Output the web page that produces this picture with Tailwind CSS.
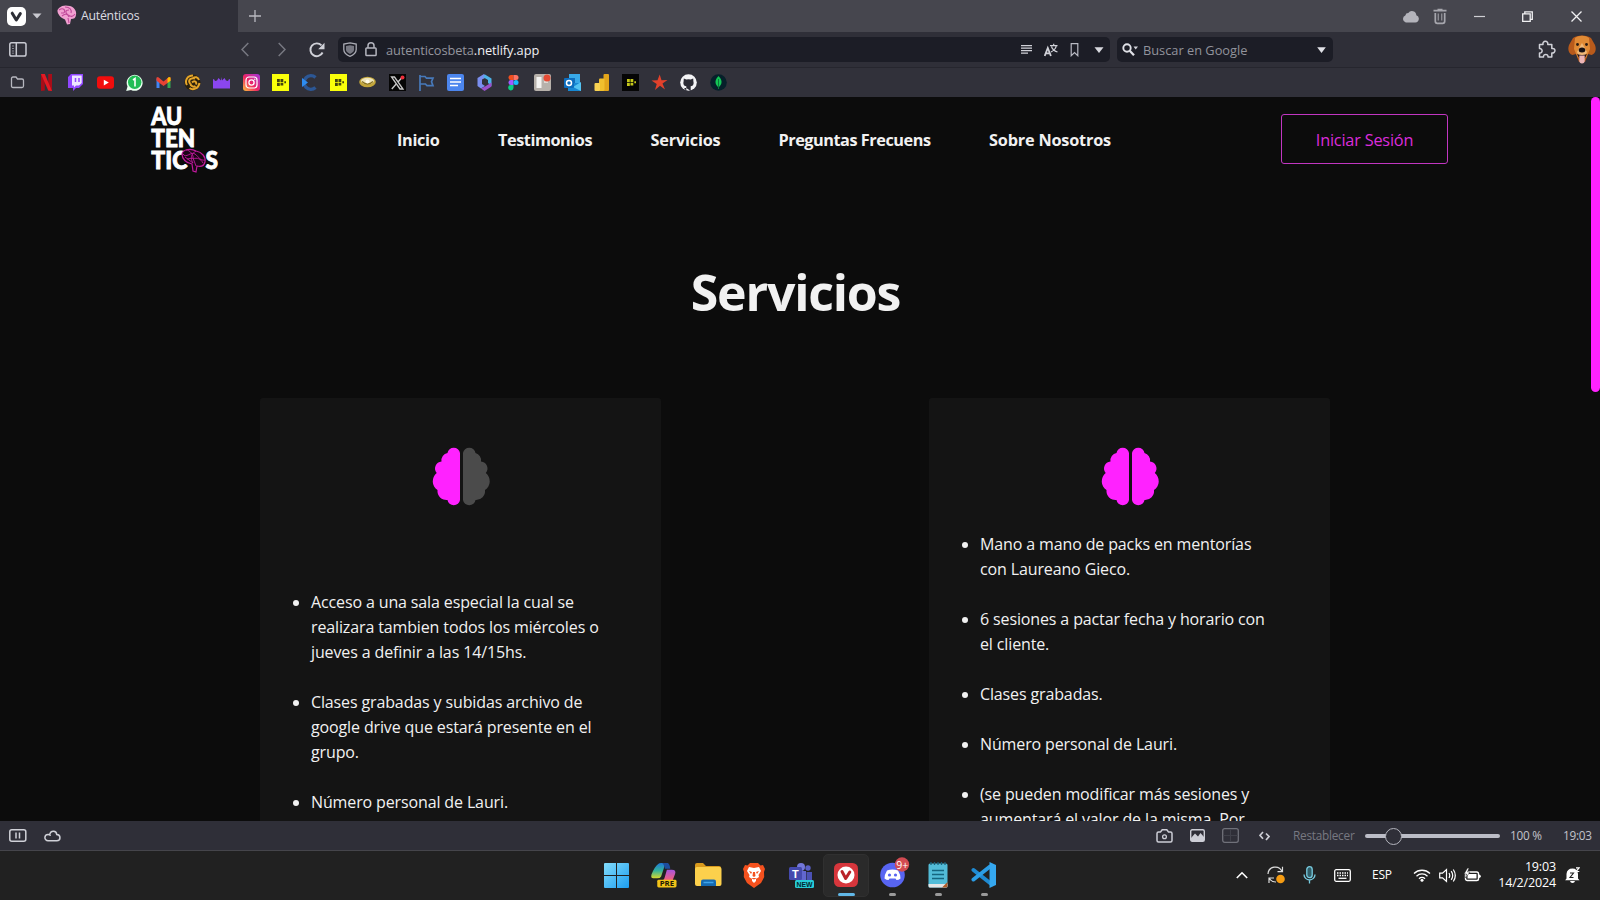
<!DOCTYPE html>
<html lang="es">
<head>
<meta charset="utf-8">
<title>Auténticos</title>
<script src="https://cdn.jsdelivr.net/npm/@tailwindcss/browser@4"></script>
</head>
<body class="flex h-[900px] w-[1600px] flex-col overflow-hidden bg-[#0c0c0c] font-['Open_Sans','Noto_Sans',sans-serif] text-[#dcdce2]">

<!-- Tab bar -->
<header class="flex h-8 shrink-0 items-center bg-[#46464e]">
  <div class="flex w-[52px] items-center gap-[6px] pl-[7px]">
    <svg class="h-[19px] w-[19px]" viewBox="0 0 19 19"><rect width="19" height="19" rx="5" fill="#fff"/><path d="M5.2 6.2 9.3 13l4-6.4" fill="none" stroke="#2d2e36" stroke-width="3" stroke-linecap="round" stroke-linejoin="round"/></svg>
    <svg class="h-[6px] w-[10px]" viewBox="0 0 10 6"><path d="M.5.5h9L5 5.5z" fill="#c9c9d0"/></svg>
  </div>
  <div class="flex h-8 w-[186px] items-center gap-[4px] bg-[#2f2f38] pb-[2px] pl-[5px]">
    <svg class="h-5 w-5" viewBox="0 0 20 20"><path d="M2 3C5 0 9 0 13 1c4 1 7 5 6 9-.5 3-2 4-5 4l-1 5-3 .5-2-5C4 13 0 9 .5 5Z" fill="#f1a0d0"/><path d="M2 5c4-3 7 0 5 3M8 2c5 0 7 3 6 6M5 11c3-3 6-2 7 1M12 5c-4 0-4 3-1 5s5 2 7-1M11 13l1 5M4 8h3" fill="none" stroke="#c1499a" stroke-width="1.1"/></svg>
    <span class="w-[60px] pt-[2px] text-[12.3px] tracking-[-0.25px] whitespace-nowrap">Auténticos</span>
  </div>
  <svg class="ml-[11px] h-3 w-3" viewBox="0 0 12 12"><path d="M6 0v12M0 6h12" stroke="#b9b9c0" stroke-width="1.3"/></svg>
  <div class="ml-auto flex items-center pr-[18px]">
    <svg class="mr-[14px] h-[13px] w-[17px]" viewBox="0 0 17 13"><path d="M3.8 12.5a3.7 3.7 0 0 1-.5-7 3 3 0 0 1 3-2.4 4.3 4.3 0 0 1 8 2.2 3.7 3.7 0 0 1-.9 7.2z" fill="#b4b4bb"/></svg>
    <svg class="mr-[27px] h-[17px] w-[14px]" viewBox="0 0 14 16"><path d="M.5 2.2h13M4.5 1h5M2.3 4.5v8.3q0 2 2 2h5.4q2 0 2-2V4.5" fill="none" stroke="#a6a6ad" stroke-width="1.7"/><path d="M5.3 5v7M8.7 5v7" stroke="#8b8b92" stroke-width="1.4"/></svg>
    <svg class="mr-[37px] h-3 w-[11px]" viewBox="0 0 11 12"><path d="M0 6.5h11" stroke="#cfcfd4" stroke-width="1.2"/></svg>
    <svg class="mr-[38px] h-[11px] w-[11px]" viewBox="0 0 11 11"><path d="M.7 2.8h7.5v7.5H.7zM2.8 2.6V.8h7.5v7.5H8.4" fill="none" stroke="#f0f0f2" stroke-width="1.3"/></svg>
    <svg class="h-[11px] w-[11px]" viewBox="0 0 11 11"><path d="m.5.5 10 10m0-10-10 10" stroke="#f0f0f2" stroke-width="1.3"/></svg>
  </div>
</header>

<!-- Address bar -->
<div class="flex h-[35px] shrink-0 items-center bg-[#2f2f38] pr-1 pl-[9px]">
  <svg class="h-[15px] w-[18px]" viewBox="0 0 18 15"><rect x=".8" y=".8" width="16.2" height="13.2" rx="1.8" fill="none" stroke="#c9cad2" stroke-width="1.5"/><path d="M7.3 1v13" stroke="#c9cad2" stroke-width="1.5"/><path d="M3 4h2M3 6.5h2M3 9h2M3 11.2h2" stroke="#85868f"/></svg>
  <svg class="ml-[214px] h-[15px] w-2" viewBox="0 0 8 15"><path d="M7.3 1 1 7.5 7.3 14" fill="none" stroke="#777881" stroke-width="1.5"/></svg>
  <svg class="ml-[29px] h-[15px] w-2" viewBox="0 0 8 15"><path d="M.7 1 7 7.5.7 14" fill="none" stroke="#777881" stroke-width="1.5"/></svg>
  <svg class="mr-[13px] ml-[23px] h-4 w-4" viewBox="0 0 16 16"><path d="M13.6 10.5A6.4 6.4 0 1 1 12.5 3.4" fill="none" stroke="#d0d1d8" stroke-width="1.9"/><path d="M15.5.8v6.4H9.2z" fill="#d0d1d8"/></svg>
  <div class="flex h-[25px] w-[772px] items-center rounded-[5px] bg-[#1c1d26] pr-[5px] pl-[5px]">
    <svg class="h-[15px] w-[14px]" viewBox="0 0 14 15"><path d="M7 .8 13.2 2v5.5c0 3-2.5 5.3-6.2 6.8C3.3 12.8.8 10.5.8 7.5V2z" fill="none" stroke="#a9aab3" stroke-width="1.3"/><path d="M7 3.2l4 .8v3.5c0 2-1.5 3.3-4 4.5-2.5-1.2-4-2.5-4-4.5V4z" fill="#777882"/></svg>
    <svg class="ml-2 h-[15px] w-3" viewBox="0 0 12 15"><rect x=".9" y="6" width="10.2" height="7.6" rx=".8" fill="none" stroke="#b4b5be" stroke-width="1.5"/><path d="M3 6V3.8a3 3 0 0 1 6 0V6" fill="none" stroke="#b4b5be" stroke-width="1.5"/></svg>
    <span class="ml-[9px] pt-[2px] text-[12.8px] tracking-[-0.08px] whitespace-nowrap text-[#94959e]">autenticosbeta<span class="text-[#f0f0f4]">.netlify.app</span></span>
    <div class="ml-auto flex items-center">
      <svg class="mr-[12px] h-[9px] w-[11px]" viewBox="0 0 11 9"><path d="M0 .7h11M0 3.2h11M0 5.7h11M0 8.2h7" stroke="#d0d1d8" stroke-width="1.2"/></svg>
      <svg class="mr-3 h-[14px] w-[14px]" viewBox="0 0 14 14"><path d="m.7 13 3.1-8 3.100 8M1.700 10.300h4.200" fill="none" stroke="#d0d1d8" stroke-width="1.800"/><path d="M6 2.700h7.500M9.700.8v2M7 9c3-1.500 4.800-3.500 5.200-6M7.500 3.500c.7 2.500 3 4.500 6 5.500" fill="none" stroke="#d0d1d8" stroke-width="1.200"/></svg>
      <svg class="mr-[15px] h-[14px] w-[9px]" viewBox="0 0 8 14"><path d="M.7.7h6.600v12L4 9.500.7 12.700z" fill="none" stroke="#b9bac3" stroke-width="1.200"/></svg>
      <svg class="mr-px h-[6px] w-[10px]" viewBox="0 0 10 6"><path d="M.5.3h9L5 6z" fill="#d8d9df"/></svg>
    </div>
  </div>
  <div class="ml-[7px] flex h-[25px] w-[216px] items-center rounded-[5px] bg-[#1c1d26] px-[5px]">
    <svg class="h-[13px] w-[17px]" viewBox="0 0 17 13"><circle cx="5" cy="5" r="3.700" fill="none" stroke="#e0e1e7" stroke-width="1.900"/><path d="m7.700 7.700 4.300 4.500" stroke="#e0e1e7" stroke-width="2.300"/><path d="M11.500 3.500H16L13.700 6.500z" fill="#d0d1d8"/></svg>
    <span class="ml-[4px] pt-[3px] text-[12.8px] whitespace-nowrap text-[#92939c]">Buscar en Google</span>
    <svg class="mr-[2px] ml-auto h-[6px] w-[9px]" viewBox="0 0 9 6"><path d="M.2.3h8.600L4.500 6z" fill="#e0e1e7"/></svg>
  </div>
  <svg class="ml-auto h-[18px] w-[18px] -translate-y-px" viewBox="0 0 18 18"><path d="M1.500 4.500H5c-1-4 5.500-4.500 4.800 0h4v4c4.200-1 4.200 5 0 4.500v4H10c.5-3.500-5-3.500-4.500 0h-4v-4c3.500.4 3.500-4.700 0-4.500z" fill="none" stroke="#d0d1d8" stroke-width="1.500" stroke-linejoin="round"/></svg>
  <svg class="ml-[12px] h-[29px] w-[28px]" viewBox="0 0 28 29"><path d="M5 3C9-.5 19-.5 23 3l4 7c2 6-.5 9-3.500 10L20 19l-3 8h-6l-3-8-3.500 1C1 19-.7 15 1 10z" fill="#b85a1b"/><path d="M7 3c4-3 10-3 14 0l1 11-4 9h-8L6 14z" fill="#e08a35"/><path d="M14 8l-5 9 2 4h6l2-4z" fill="#efb878"/><circle cx="9.500" cy="9.500" r="1.400" fill="#2a1a12"/><circle cx="18.500" cy="9.500" r="1.400" fill="#2a1a12"/><ellipse cx="14" cy="15" rx="3.300" ry="2.500" fill="#171013"/><path d="M9 19q5 2 10 0l-2 4h-6z" fill="#2a1515"/><path d="M11.300 20.500h5.400v5a2.700 3 0 0 1-5.400 0z" fill="#ecb5b7"/></svg>
</div>

<!-- Bookmarks bar -->
<nav class="flex h-[30px] shrink-0 items-center border-t border-[#26262e] bg-[#31313a] pl-[3px] [&>span]:flex [&>span]:w-[29.2px] [&>span]:justify-center [&_svg]:h-[17px] [&_svg]:w-[17px]">
  <span><svg viewBox="0 0 17 17"><path d="M2.500 4.500q0-1.500 1.500-1.500h3l1.500 2h4.500q1.500 0 1.500 1.500v5.500q0 1.500-1.500 1.500H4q-1.500 0-1.500-1.500z" fill="none" stroke="#b6b7bf" stroke-width="1.300"/></svg></span>
  <span><svg viewBox="0 0 17 17"><path d="M3 0h3.800v16.500L3 17zM10.200 0H14v17l-3.800-.5z" fill="#a80d18"/><path d="M3 0h3.800L14 17l-3.800-.5z" fill="#e31b24"/></svg></span>
  <span><svg viewBox="0 0 17 17"><path d="M4 0h12v10l-4 4H9l-3 3v-3H1V3z" fill="#9147ff"/><path d="M5 1.500h9.700V9L12 11.500H9L7 13.500v-2H5z" fill="#eee6ff"/><path d="M8.500 4v4M12 4v4" stroke="#9147ff" stroke-width="1.500"/></svg></span>
  <span><svg viewBox="0 0 17 17"><rect y="2.300" width="17" height="12.500" rx="3" fill="#f20d0d"/><path d="m6.800 5.800 5 2.800-5 2.800z" fill="#fff"/></svg></span>
  <span><svg viewBox="0 0 17 17"><path d="M.2 17 1.500 12.500A8 8 0 1 1 5 16z" fill="#e9fff0"/><circle cx="8.700" cy="8.300" r="6.700" fill="#21bd55"/><path d="m7 6 2-1.500v8" fill="none" stroke="#fff" stroke-width="1.600"/></svg></span>
  <span><svg viewBox="0 0 17 17"><path d="M1.500 4.500h3v9.500h-3z" fill="#4285f4"/><path d="M12.500 4.500h3v9.500h-3z" fill="#34a853"/><path d="M1.500 3.500 3 3l5.500 4.500L14 3l1.500.5v3.300L8.500 12 1.500 6.800z" fill="#e84234"/><path d="m12.500 4.200 1.500-1.200 1.500.5v3.300L12.500 9z" fill="#fbbc04"/></svg></span>
  <span><svg viewBox="0 0 17 17"><circle cx="8.500" cy="8.500" r="8" fill="#2b210e"/><g fill="none" stroke="#e5a52a" stroke-width="2"><path d="M9 1.500c-6 0-8.500 5.500-6 9.500M11 4.500c-5-1-7 2-5 5M15 6c-1-3-4-3.500-6-2M15.500 9c-1 6-7 7.500-10 5M6.500 9c-.5 3 3 4.500 5 3M8 8.500c2.500-2.500 5-.5 4 2"/></g></svg></span>
  <span><svg viewBox="0 0 17 17"><path d="M0 5q1.500 0 2 2l2-.5L5.500 4 8 6.500 8.500 3 9 6.500 11.500 4 13 6.500l2 .5q.5-2 2-2v9.500H0z" fill="#8b46f0"/></svg></span>
  <span><svg viewBox="0 0 17 17"><defs><linearGradient id="ig" x1="0" y1="1" x2="1" y2="0"><stop stop-color="#ffc53a"/><stop offset=".45" stop-color="#ee2564"/><stop offset="1" stop-color="#a136dd"/></linearGradient></defs><rect width="17" height="17" rx="3" fill="url(#ig)"/><rect x="3" y="3" width="11" height="11" rx="3" fill="none" stroke="#fff" stroke-width="1.200"/><circle cx="8.500" cy="8.500" r="2.600" fill="none" stroke="#fff" stroke-width="1.300"/><circle cx="11.800" cy="5.200" r=".7" fill="#fff"/></svg></span>
  <span><svg viewBox="0 0 17 17"><path fill="#faff0a" d="M0 0h17v17H0z"/><path d="M5 5h2.800v3H5zm3.500 0h2.800v3H8.500zM5 8.700h2.800v3.300H5zm3.500 0h2.800v2.800H8.500zm3.800-1.500h1.700v2h-1.700z" fill="#42430e"/></svg></span>
  <span><svg viewBox="0 0 17 17"><path d="M14.500 3.500A6.800 6.800 0 1 0 14.500 13.500" fill="none" stroke="#2c5795" stroke-width="3.300"/><path d="m1 4 6 4.500-6 4.500z" fill="#2e8cf0"/></svg></span>
  <span><svg viewBox="0 0 17 17"><path fill="#faff0a" d="M0 0h17v17H0z"/><path d="M5 5h2.800v3H5zm3.500 0h2.800v3H8.500zM5 8.700h2.800v3.300H5zm3.500 0h2.800v2.800H8.500zm3.800-1.500h1.700v2h-1.700z" fill="#42430e"/></svg></span>
  <span><svg viewBox="0 0 17 17"><ellipse cx="8.500" cy="8" rx="8.300" ry="5.300" fill="#c3a63a"/><ellipse cx="8.500" cy="7" rx="6.500" ry="3.300" fill="#eee4ba"/><path d="M3 7.500q5.500 5 11 0" fill="none" stroke="#87711f" stroke-width="1.300"/><circle cx="8.500" cy="7.500" r="2" fill="#fffbe8"/></svg></span>
  <span><svg viewBox="0 0 17 17"><path fill="#050505" d="M0 0h17v17H0z"/><path d="M2.500 3h3L14 15h-3z" fill="none" stroke="#c7c7c7" stroke-width="1.300"/><path d="m13.500 3-4.500 5M7.200 10 2.800 15" stroke="#c7c7c7" stroke-width="1.400"/><circle cx="13.500" cy="3.500" r="2" fill="#ee2d3a"/></svg></span>
  <span><svg viewBox="0 0 17 17"><path d="M2 1v16M2 2.500h5l1.500 1.700H15l-1.500 3.500 1.500 4H9L7.500 10H2" fill="none" stroke="#4779ba" stroke-width="1.700"/></svg></span>
  <span><svg viewBox="0 0 17 17"><rect width="17" height="17" rx="2" fill="#4c86ee"/><path d="M3 4.500h11M3 8h11M3 11.500h8" stroke="#fff" stroke-width="1.600"/></svg></span>
  <span><svg viewBox="0 0 17 17"><path d="M8 0 1.500 4v8L5 14.500l4-2.500-3-2V5.500L11 3z" fill="#7b8ff0"/><path d="m9 .5 6.500 4V12L12 9V6L7 3z" fill="#4cb3e8"/><path d="M5 14.500 8.500 17l7-4.500v-4L9 12.500z" fill="#9a51cc"/></svg></span>
  <span><svg viewBox="0 0 17 17"><path d="M8.500 1H6a2.500 2.500 0 0 0 0 5h2.500z" fill="#f24e1e"/><path d="M8.500 1H11a2.500 2.500 0 0 1 0 5H8.500z" fill="#ff7262"/><path d="M8.500 6H6a2.500 2.500 0 0 0 0 5h2.500z" fill="#a259ff"/><circle cx="11" cy="8.500" r="2.500" fill="#1abcfe"/><path d="M8.500 11H6A2.700 2.700 0 1 0 8.500 14z" fill="#0acf83"/></svg></span>
  <span><svg viewBox="0 0 17 17"><rect width="17" height="17" rx="2" fill="#b7b1ab"/><path d="M2.500 3h5v11h-5z" fill="#f5f4f2"/><path d="M10 3h4v6h-4z" fill="#ddd8d3"/><circle cx="13" cy="4" r="3.500" fill="#e64b35"/></svg></span>
  <span><svg viewBox="0 0 17 17"><path d="M5 0h11v12H5z" fill="#38a9e8"/><path d="M5 4h6v5H5z" fill="#136cb7"/><path d="M4 9h13v8H4z" fill="#1688d4"/><path d="m17 8-8 5 8 4z" fill="#54c4f2"/><rect y="4" width="10" height="10" rx="1" fill="#0d6dbd"/><circle cx="5" cy="9" r="2.500" fill="none" stroke="#fff" stroke-width="1.500"/></svg></span>
  <span><svg viewBox="0 0 17 17"><rect x="10.500" width="5.500" height="17" rx="1" fill="#e3a51b"/><rect x="6" y="4.500" width="5.500" height="12.500" rx="1" fill="#f1bf2d"/><rect x="1.500" y="9" width="5.500" height="8" rx="1" fill="#f8d252"/></svg></span>
  <span><svg viewBox="0 0 17 17"><path fill="#050505" d="M0 0h17v17H0z"/><path d="M5 5h2.800v3H5zm3.500 0h2.800v3H8.500zM5 8.700h2.800v3.300H5zm3.500 0h2.800v2.800H8.500zm3.800-1.500h1.700v2h-1.700z" fill="#c5c81a"/></svg></span>
  <span><svg viewBox="0 0 17 17"><path d="m8.700.5 1.800 5.700 6-.2-5 3.500 2.500 6-5-3.700L4 16l1.700-6L.5 6.500l6-.3z" fill="#e2412b"/></svg></span>
  <span><svg viewBox="0 0 17 17"><circle cx="8.500" cy="8.500" r="8.300" fill="#f4f4f6"/><path d="M6.300 17v-3q-2.800.5-3.300-1.500M6.300 14v-1.700C3.500 12 3 9.500 3.600 7.500L3.800 4.500l2.500 1q2.200-.5 4.400 0l2.500-1 .2 3c.6 2 .1 4.500-2.700 4.800V17z" fill="#2c2c35"/></svg></span>
  <span><svg viewBox="0 0 17 17"><circle cx="8.500" cy="8.500" r="8.300" fill="#06202a"/><path d="M8.500 2c4.500 4.500 3.500 8.500 0 11.500C5 10.500 4 6.500 8.500 2z" fill="#13c655"/><path d="M8.500 5v10" stroke="#087a3a"/></svg></span>
</nav>

<!-- Page -->
<main class="relative h-[724px] shrink-0 overflow-hidden bg-[#0c0c0c] text-[#f1f1f1]">
  <div class="flex h-[86px] items-center pr-[152px] pl-[151px]">
    <svg class="h-[70px] w-[68px] overflow-visible" viewBox="0 0 68 70" font-family="Lato, sans-serif" font-weight="900" font-size="25.5" fill="#fff" stroke="#fff" stroke-width=".9">
      <text x="0.300" y="20" textLength="31" lengthAdjust="spacingAndGlyphs">AU</text>
      <text x="0.300" y="41.600" textLength="44" lengthAdjust="spacingAndGlyphs">TEN</text>
      <text x="0.300" y="63.500" textLength="36" lengthAdjust="spacingAndGlyphs">TIC</text>
      <text x="54.500" y="63.500" textLength="12.500" lengthAdjust="spacingAndGlyphs">S</text>
      <path d="M31 49c1-5 9-6 14-3 6 1 10 6 9 11-1 4-4 5-8 4l-1 6-3-1-1-7c-6-1-10-5-10-10z" fill="#1a0616" stroke="#c11a9d" stroke-width="1.200"/>
      <path d="M32 49c3 5 8-3 12 0s5 7 10 6M35 45c4 0 8 5 7 9M45 46c-5 3-6 7-3 12M42 54c4-2 8 0 10 4M36 54l6-1 3 8M34 52l8 6" fill="none" stroke="#c11a9d" stroke-width=".9"/>
    </svg>
    <nav class="ml-[178px] flex gap-[58px] text-[16.3px] font-bold tracking-[-0.35px] whitespace-nowrap">
      <a class="w-[43px]">Inicio</a><a class="w-[94.500px] tracking-[-0.45px]">Testimonios</a><a class="w-[70px] tracking-[-0.2px]">Servicios</a><a class="w-[152.500px] tracking-[-0.47px]">Preguntas Frecuens</a><a class="w-[123px] tracking-[-0.2px]">Sobre Nosotros</a>
    </nav>
    <a class="ml-auto flex h-[50px] w-[167px] -translate-y-px items-center justify-center rounded-[3px] border border-[#c236c2] pt-[2px] text-[16.3px] tracking-[-0.2px] whitespace-nowrap text-[#dc2cdc]">Iniciar Sesión</a>
  </div>
  <h1 class="mt-[70px] pr-[9px] text-center text-[50px] leading-[78px] font-bold tracking-[-1.2px]">Servicios</h1>
  <div class="mt-[67px] flex justify-between pr-[270px] pl-[260px] text-[16px] leading-[25px] tracking-[-0.13px]">
    <section class="h-[600px] w-[401px] rounded-[3px] bg-[#141414] pt-[49px]">
      <svg class="mx-auto h-[59px] w-[58px] overflow-visible" viewBox="0 0 58 59"><path d="M28 6a6.300 6 0 0 0-12.500 0A7.500 7.500 0 0 0 9.500 14.500 7 7 0 0 0 4.700 26 10.500 10.500 0 0 0 5.500 43 9 9 0 0 0 15.500 53a6.300 6 0 0 0 12.500 0z" fill="#ff22ff"/><path d="M31 6a6.300 6 0 0 1 12.500 0A7.500 7.500 0 0 1 49 14.500 7 7 0 0 1 53.800 26 10.500 10.500 0 0 1 53 43 9 9 0 0 1 43.500 53a6.300 6 0 0 1-12.500 0z" fill="#4b4b4b"/></svg>
      <ul class="mt-[84px] flex list-disc flex-col gap-[25px] pl-[51px] whitespace-nowrap">
        <li>Acceso a una sala especial la cual se<br>realizara tambien todos los miércoles o<br>jueves a definir a las 14/15hs.</li>
        <li>Clases grabadas y subidas archivo de<br>google drive que estará presente en el<br>grupo.</li>
        <li>Número personal de Lauri.</li>
      </ul>
    </section>
    <section class="h-[600px] w-[401px] rounded-[3px] bg-[#141414] pt-[49px]">
      <svg class="mx-auto h-[59px] w-[58px] overflow-visible" viewBox="0 0 58 59"><path d="M28 6a6.300 6 0 0 0-12.500 0A7.500 7.500 0 0 0 9.500 14.500 7 7 0 0 0 4.700 26 10.500 10.500 0 0 0 5.500 43 9 9 0 0 0 15.500 53a6.300 6 0 0 0 12.500 0zM31 6a6.300 6 0 0 1 12.500 0A7.500 7.500 0 0 1 49 14.500 7 7 0 0 1 53.800 26 10.500 10.500 0 0 1 53 43 9 9 0 0 1 43.500 53a6.300 6 0 0 1-12.500 0z" fill="#ff22ff"/></svg>
      <ul class="mt-[26px] flex list-disc flex-col gap-[25px] pl-[51px] whitespace-nowrap">
        <li>Mano a mano de packs en mentorías<br>con Laureano Gieco.</li>
        <li>6 sesiones a pactar fecha y horario con<br>el cliente.</li>
        <li>Clases grabadas.</li>
        <li>Número personal de Lauri.</li>
        <li>(se pueden modificar más sesiones y<br>aumentará el valor de la misma. Por</li>
      </ul>
    </section>
  </div>
  <div class="absolute top-0 right-0 h-[295px] w-[9px] rounded-full bg-[#ff22ff]"></div>
</main>

<!-- Status bar -->
<div class="flex h-[30px] shrink-0 items-center border-b border-[#45454b] bg-[#2f2f38] pr-[10px] pl-[9px] text-[11.8px] tracking-[-0.25px] whitespace-nowrap">
  <svg class="h-[13px] w-[18px]" viewBox="0 0 18 13"><rect x=".8" y=".8" width="16" height="11.400" rx="2" fill="none" stroke="#d0d1d8" stroke-width="1.500"/><path d="M7 3.500v6M10.500 3.500v6" stroke="#d0d1d8" stroke-width="1.500"/></svg>
  <svg class="ml-[17px] h-3 w-[17px]" viewBox="0 0 17 12"><path d="M4 10.800a3.200 3.200 0 0 1 .2-6.400c.8.100 1.500.3 2 .8M5.600 4.800C6.500.2 12.300-.1 12.800 4.600c4.200.2 4.200 6.200 0 6.200H4" fill="none" stroke="#d0d1d8" stroke-width="1.500" stroke-linecap="round"/></svg>
  <div class="ml-auto flex items-center">
    <svg class="h-[14px] w-[17px]" viewBox="0 0 17 14"><path d="M2.500 3h2l1.700-2.200h4.600L12.500 3h2Q16 3 16 4.500v7q0 1.500-1.500 1.500h-12Q1 13 1 11.500v-7Q1 3 2.500 3z" fill="none" stroke="#cdced6" stroke-width="1.500"/><circle cx="8.500" cy="7.800" r="1.900" fill="none" stroke="#cdced6" stroke-width="1.300"/></svg>
    <svg class="ml-[17px] h-[13px] w-[15px]" viewBox="0 0 15 13"><rect x=".7" y=".7" width="13.600" height="11.600" rx="1.500" fill="none" stroke="#cdced6" stroke-width="1.400"/><path d="m1 9 4-4.500 3 3L10.500 4 14 8v4H1z" fill="#cdced6"/></svg>
    <svg class="ml-[17px] h-[15px] w-[17px]" viewBox="0 0 17 15"><rect x=".7" y=".7" width="15.600" height="13.600" rx="2" fill="none" stroke="#70717a" stroke-width="1.300"/><path d="M8.500 1v13M1 7.500h15" stroke="#40414a"/></svg>
    <svg class="ml-[20px] h-[10px] w-[11px]" viewBox="0 0 11 10"><path d="M4 1 1 4.300 4 7.700M7 2.500l3 3L7 9" fill="none" stroke="#cdced6" stroke-width="1.700"/></svg>
    <span class="ml-[23px] w-[61px] text-[#777881]">Restablecer</span>
    <div class="relative ml-[11px] h-1 w-[135px] rounded-full bg-[#bcbdc7]"><div class="absolute -top-[6px] left-[20px] h-[17px] w-[17px] rounded-full border border-[#b4b5be] bg-[#2f2f38]"></div></div>
    <span class="ml-[10px] w-[32px] text-[#c2c3cb]">100 %</span>
    <span class="ml-[21px] w-[27px] text-[#c2c3cb]">19:03</span>
  </div>
</div>

<!-- Taskbar -->
<footer class="flex h-[49px] shrink-0 items-center bg-[#212121] pr-[20px] pb-px pl-[593px]">
  <div class="flex [&>span]:relative [&>span]:flex [&>span]:h-[43px] [&>span]:w-[46px] [&>span]:items-center [&>span]:justify-center">
    <span><svg class="h-[25px] w-[25px]" viewBox="0 0 25 25"><defs><linearGradient id="win" x1="0" y1="0" x2="1" y2="1"><stop stop-color="#82dcfb"/><stop offset="1" stop-color="#1c9df0"/></linearGradient></defs><path d="M0 1q0-1 1-1h11v12H0zM13 0h11q1 0 1 1v11H13zM0 13h12v12H1q-1 0-1-1zM13 13h12v11q0 1-1 1H13z" fill="url(#win)"/></svg></span>
    <span><svg class="ml-[4px] h-[26px] w-[28px]" viewBox="0 0 28 27"><defs><linearGradient id="cpa" x1="0" y1="0" x2="0" y2="1"><stop stop-color="#1f77d8"/><stop offset=".5" stop-color="#34b39a"/><stop offset="1" stop-color="#d9d92c"/></linearGradient><linearGradient id="cpb" x1="0" y1="0" x2="0" y2="1"><stop stop-color="#a654de"/><stop offset="1" stop-color="#f56078"/></linearGradient></defs><path d="M8 2q1-1 3-1h7q-3 0-4 5l-3 9q-1 2-4 2H3q-3 0-2-4Q4 5 8 2z" fill="url(#cpa)"/><path d="M17 8h5q5 0 3.500 4.500L23 19H12q2 0 3-4z" fill="url(#cpb)"/><path d="M12 1h6q2 1 2.500 6H15q-1-5-3-6z" fill="#1d4d9e"/><rect x="7" y="18.500" width="20" height="8" rx="1.500" fill="#f3c318"/><text x="9.500" y="25.400" font-family="Open Sans, sans-serif" font-size="8" font-weight="700" textLength="15" lengthAdjust="spacingAndGlyphs" fill="#1c1803">PRE</text></svg></span>
    <span><svg class="h-[24px] w-[27px]" viewBox="0 0 27 24"><path d="M0 2q0-2 2-2h6l3 3h13q2 0 2 2v6H0z" fill="#d99a1d"/><rect y="4" width="26.500" height="19" rx="2" fill="#fcd04c"/><path d="M6 18.500q0-2 2-2h11q2 0 2 2V23H6z" fill="#1569b0"/><path d="M8.500 19.500h10" stroke="#3fa4ea" stroke-width="1.500"/></svg></span>
    <span><svg class="h-[25px] w-[22px]" viewBox="0 0 22 25"><path d="M7 0h8l2.500 2.500L20 2l2 4-1 3 .2 5L18 20l-7 5-7-5L.8 14 1 9 0 6l2-4 2.500.5z" fill="#f4511e"/><path d="m6 4 5 1 5-1 2 4-2.500 4 .5 2-3 2v2l-2 2-2-2v-2l-3-2 .5-2L4 8z" fill="#fff"/><path d="m6 8 3 1-1 2zM16 8l-3 1 1 2zM10 9h2l.5 4-1.500 1-1.500-1zM8 15l3 1.500 3-1.500" fill="#f4511e"/></svg></span>
    <span><svg class="h-[26px] w-[27px]" viewBox="0 0 27 26"><circle cx="14" cy="5" r="4" fill="#7377da"/><circle cx="21" cy="6" r="2.700" fill="#5a60c7"/><path d="M9 9h10v14H9z" fill="#6267cf"/><path d="M19.500 10H25v10h-5.500z" fill="#4b51b4"/><rect x="2" y="5" width="13" height="13" rx="1.500" fill="#454aae"/><text x="5" y="15.500" font-family="Liberation Sans, sans-serif" font-weight="700" font-size="11" fill="#fff">T</text><rect x="8" y="18" width="19" height="8" rx="1.500" fill="#27cdd8"/><text x="9.500" y="25" font-family="Liberation Sans, sans-serif" font-size="7.500" font-weight="700" textLength="16" lengthAdjust="spacingAndGlyphs" fill="#03282e">NEW</text></svg></span>
    <span class="rounded-[5px] border border-[#303030] bg-[#2a2a2a]"><svg class="h-[24px] w-[24px]" viewBox="0 0 24 24"><rect width="24" height="24" rx="5.500" fill="#d7363c"/><circle cx="12" cy="12" r="8.500" fill="#fff"/><path d="m8 8.500 3.700 7 4.100-6.500" fill="none" stroke="#b92329" stroke-width="3" stroke-linecap="round" stroke-linejoin="round"/></svg><i class="absolute bottom-0 h-[3px] w-[17px] rounded-full bg-[#61b8e8]"></i></span>
    <span><svg class="h-[32px] w-[32px] translate-x-[2px] -translate-y-[3px]" viewBox="0 0 32 32"><circle cx="14.500" cy="19" r="12.300" fill="#5865f2"/><path d="M9 14.500q5.500-2 11 0 2.500 4 2.500 8-2 1.500-4 1.500l-1-1.500h-6L10.500 24q-2 0-4-1.500 0-4 2.500-8z" fill="#fff"/><circle cx="11.500" cy="19" r="1.600" fill="#5865f2"/><circle cx="17.500" cy="19" r="1.600" fill="#5865f2"/><circle cx="24" cy="8.500" r="7.200" fill="#d24b52"/><text x="18.200" y="12.500" font-family="Open Sans, sans-serif" font-size="10.500" fill="#fff">9+</text></svg><i class="absolute bottom-[1px] h-[3px] w-[7px] rounded-full bg-[#9a9a9a]"></i></span>
    <span><svg class="h-[26px] w-[20px]" viewBox="0 0 20 26"><rect x=".5" y="1.500" width="19" height="24" rx="1.500" fill="#52bcd8"/><path d="M.5 22h19v2q0 1.500-1.500 1.500H2q-1.500 0-1.500-1.500z" fill="#e5e5e5"/><path d="M14 25.500 19.500 20v4q0 1.500-1.500 1.500z" fill="#b05b27"/><path d="M3 0v3M6.500 0v3M10 0v3M13.500 0v3M17 0v3" stroke="#19627c" stroke-width="1.300"/><path d="M4 8.500h12M4 12.500h12M4 16.500h12" stroke="#15657f" stroke-width="1.500"/></svg><i class="absolute bottom-[1px] h-[3px] w-[7px] rounded-full bg-[#9a9a9a]"></i></span>
    <span><svg class="h-[26px] w-[26px]" viewBox="0 0 26 26"><path d="M2.500 8 19 21" stroke="#1f8ad2" stroke-width="4" stroke-linecap="round"/><path d="M2.500 17.500 19 4.500" stroke="#2b9de5" stroke-width="4" stroke-linecap="round"/><path d="M18.500 0 25 3v20l-6.500 3z" fill="#35a8f0"/></svg><i class="absolute bottom-[1px] h-[3px] w-[7px] rounded-full bg-[#9a9a9a]"></i></span>
  </div>
  <div class="ml-auto flex items-center whitespace-nowrap text-white">
    <svg class="h-[8px] w-[12px]" viewBox="0 0 12 8"><path d="m.8 7 5.200-5.200L11.200 7" fill="none" stroke="#fff" stroke-width="1.600"/></svg>
    <svg class="ml-[19px] h-[18px] w-[18px]" viewBox="0 0 18 18"><path d="M1 8a7.300 7.300 0 0 1 14-2.500M15.500.7v5h-5M9 16a7.500 7.500 0 0 1-6.500-3.500M2 17v-5h5" fill="none" stroke="#ddd" stroke-width="1.200"/><circle cx="13.500" cy="13" r="4.300" fill="#f59c13"/></svg>
    <svg class="ml-[18px] h-[18px] w-[13px]" viewBox="0 0 13 18"><rect x="3.800" y=".7" width="5.400" height="11" rx="2.700" fill="#315e68" stroke="#78cce0" stroke-width="1.300"/><path d="M1 8.500a5.500 5.500 0 0 0 11 0M6.500 14v3.500" fill="none" stroke="#78cce0" stroke-width="1.300"/></svg>
    <svg class="ml-[18px] h-[13px] w-[17px]" viewBox="0 0 17 13"><rect x=".7" y=".7" width="15.600" height="11.600" rx="1.500" fill="none" stroke="#fff" stroke-width="1.300"/><path d="M3 4h11M3 6.500h11" stroke="#fff" stroke-width="1.300" stroke-dasharray="1.500 1"/><path d="M4.500 9.300h8" stroke="#fff" stroke-width="1.300"/></svg>
    <span class="ml-[21px] w-[21px] text-[12px] tracking-[-0.2px]">ESP</span>
    <svg class="ml-[20px] h-[14px] w-[18px]" viewBox="0 0 18 14"><path d="M1 5.500a11.500 11.500 0 0 1 16 0M3.500 8.200a7.800 7.800 0 0 1 11 0M6 10.700a4.300 4.300 0 0 1 6 0" fill="none" stroke="#fff" stroke-width="1.300"/><circle cx="9" cy="12.300" r="1.500" fill="#fff"/></svg>
    <svg class="ml-[8px] h-[15px] w-[17px]" viewBox="0 0 17 15"><path d="M.7 5.200h2.800L7.500 1.500v12L3.500 9.800H.7zM10 5q1.500 2.500 0 5M12.200 3.200q3 4.300 0 8.600M14.300 1.500q4 6 0 12" fill="none" stroke="#fff" stroke-width="1.200"/></svg>
    <svg class="ml-[8px] h-[14px] w-[17px]" viewBox="0 0 17 14"><rect x="1.500" y="4" width="13" height="8.500" rx="1.800" fill="none" stroke="#fff" stroke-width="1.400"/><path d="M3.500 6h9v4.500h-9z" fill="#fff"/><path d="M15 6.500q1.800 0 1.800 1.700T15 10z" fill="#fff"/><path d="M3.500 0 0 6h2.500L1.500 10 6 4H3.500L5 0z" fill="#fff" stroke="#212121" stroke-width=".5"/></svg>
    <div class="ml-[17px] w-[58px] text-right text-[12.500px] leading-[16.500px] tracking-[-0.15px]">19:03<br>14/2/2024</div>
    <svg class="ml-[9px] h-[16px] w-[15px]" viewBox="0 0 15 16"><path d="M1.500 11.500V7Q2 1.500 7.500 1.500q5 0 5.500 5.500v4.500l1.500 1.800H.2zM5 14h5q-.5 2-2.500 2T5 14z" fill="#fff"/><path d="M5 6h3.500L5 10.500h3.500" fill="none" stroke="#212121" stroke-width="1.100"/><path d="M11 .8h3.200L11 4.500h3.300" fill="none" stroke="#fff" stroke-width="1.200"/></svg>
  </div>
</footer>
</body>
</html>
